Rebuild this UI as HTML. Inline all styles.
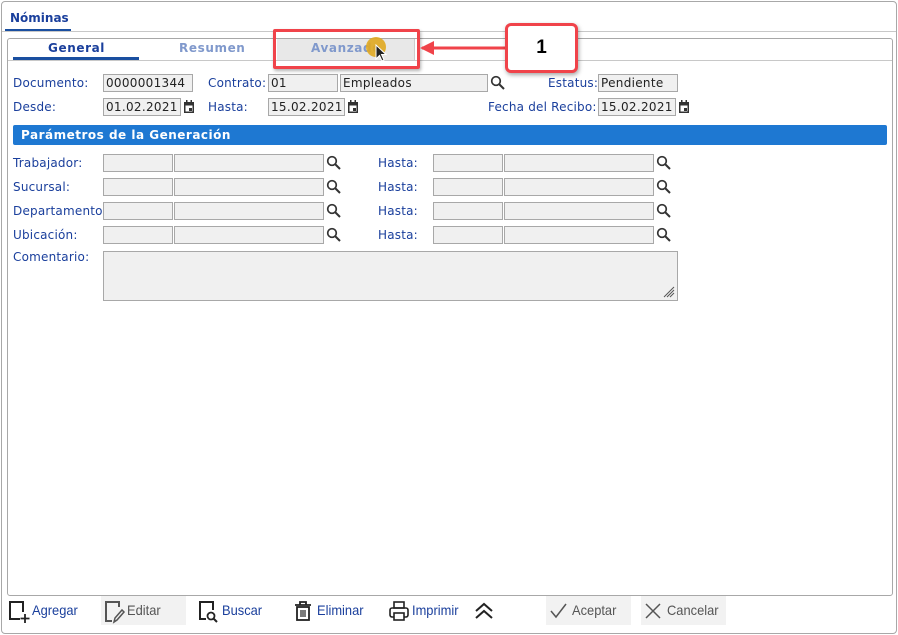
<!DOCTYPE html>
<html><head><meta charset="utf-8"><style>
*{box-sizing:border-box;margin:0;padding:0}
body{width:898px;height:635px;background:#fff;position:relative;overflow:hidden;font-family:"DejaVu Sans","Liberation Sans",sans-serif;}
.a{position:absolute}
.lbl{position:absolute;font-size:12px;color:#1a3f9c;letter-spacing:0.2px}
.inp{position:absolute;height:18px;background:#f0f0f0;border:1px solid #a8a8a8;font-size:12px;color:#222;padding-left:2px;line-height:16px;letter-spacing:0.3px}
.tb{position:absolute;font-family:"Liberation Sans",sans-serif;font-size:14px;color:#1a3f9c;top:602px;transform:scaleX(0.92);transform-origin:left}
.tbg{color:#555}
</style></head><body>
<div class="a" style="left:1px;top:1px;width:896px;height:633px;border:1px solid #a8a8a8;border-radius:4px"></div>
<div class="a" style="left:10px;top:11px;font-size:12px;font-weight:bold;color:#1a3f9c">Nóminas</div>
<div class="a" style="left:5px;top:29px;width:66px;height:3px;background:#1a4fa0"></div>
<div class="a" style="left:2px;top:31px;width:894px;height:1px;background:#c8c8c8"></div>
<div class="a" style="left:7px;top:38px;width:886px;height:558px;border:1px solid #a8a8a8;border-radius:3px"></div>
<div class="a" style="left:277px;top:39px;width:138px;height:21px;background:#e8e8e8;border-right:1px solid #ccc"></div>
<div class="a" style="left:8px;top:60px;width:884px;height:1px;background:#c8c8c8"></div>
<div class="a" style="left:48px;top:41px;font-size:12px;font-weight:bold;color:#1a3f9c;letter-spacing:0.6px">General</div>
<div class="a" style="left:13px;top:57px;width:126px;height:3px;background:#1a4fa0"></div>
<div class="a" style="left:179px;top:41px;font-size:12px;font-weight:bold;color:#8099cc;letter-spacing:0.6px">Resumen</div>
<div class="a" style="left:311px;top:41px;font-size:12px;font-weight:bold;color:#8099cc;letter-spacing:0.6px">Avanzado</div>
<div class="a" style="left:366px;top:37px;width:20px;height:20px;border-radius:50%;background:#e0a820;opacity:0.9"></div>
<svg class="a" style="left:375px;top:44px" width="14" height="20"><path d="M1 1 L1 15 L4.5 11.5 L7 17 L9 16 L6.5 10.5 L11 10.5 Z" fill="#222" stroke="#fff" stroke-width="1"/></svg>
<div class="a" style="left:273px;top:29px;width:147px;height:40px;border:3px solid #f0434a;border-radius:2px;box-shadow:1px 2px 3px rgba(0,0,0,.3)"></div>
<svg class="a" style="left:418px;top:38px" width="90" height="20"><path d="M4 10 L88 10" stroke="#f0434a" stroke-width="3"/><path d="M2 10 L16 3 L16 17 Z" fill="#f0434a"/></svg>
<div class="a" style="left:505px;top:23px;width:73px;height:50px;border:3px solid #f0434a;border-radius:6px;background:#fff;box-shadow:1px 2px 4px rgba(0,0,0,.35);font-family:'Liberation Sans',sans-serif;font-weight:bold;font-size:19px;text-align:center;line-height:44px">1</div>

<div class="lbl" style="left:13px;top:76px">Documento:</div>
<div class="inp" style="left:103px;top:74px;width:90px">0000001344</div>
<div class="lbl" style="left:208px;top:76px">Contrato:</div>
<div class="inp" style="left:268px;top:74px;width:70px">01</div>
<div class="inp" style="left:340px;top:74px;width:148px">Empleados</div>
<div class="lbl" style="left:548px;top:76px">Estatus:</div>
<div class="inp" style="left:598px;top:74px;width:80px">Pendiente</div>
<div class="lbl" style="left:13px;top:100px">Desde:</div>
<div class="inp" style="left:103px;top:98px;width:78px">01.02.2021</div>
<div class="lbl" style="left:208px;top:100px">Hasta:</div>
<div class="inp" style="left:268px;top:98px;width:77px">15.02.2021</div>
<div class="lbl" style="left:488px;top:100px">Fecha del Recibo:</div>
<div class="inp" style="left:598px;top:98px;width:78px">15.02.2021</div>
<svg class="a" style="left:183px;top:100px" width="12" height="14"><rect x="1" y="2" width="10" height="11" fill="#333"/><rect x="2.5" y="5.5" width="7" height="6" fill="#fff"/><rect x="6" y="8" width="3" height="3" fill="#333"/><rect x="3" y="0" width="1.5" height="3" fill="#333"/><rect x="7.5" y="0" width="1.5" height="3" fill="#333"/></svg>
<svg class="a" style="left:347px;top:100px" width="12" height="14"><rect x="1" y="2" width="10" height="11" fill="#333"/><rect x="2.5" y="5.5" width="7" height="6" fill="#fff"/><rect x="6" y="8" width="3" height="3" fill="#333"/><rect x="3" y="0" width="1.5" height="3" fill="#333"/><rect x="7.5" y="0" width="1.5" height="3" fill="#333"/></svg>
<svg class="a" style="left:678px;top:100px" width="12" height="14"><rect x="1" y="2" width="10" height="11" fill="#333"/><rect x="2.5" y="5.5" width="7" height="6" fill="#fff"/><rect x="6" y="8" width="3" height="3" fill="#333"/><rect x="3" y="0" width="1.5" height="3" fill="#333"/><rect x="7.5" y="0" width="1.5" height="3" fill="#333"/></svg>
<svg class="a" style="left:490px;top:75px" width="16" height="16"><circle cx="6" cy="6" r="4.3" fill="none" stroke="#333" stroke-width="1.7"/><path d="M9 9 L14 14" stroke="#333" stroke-width="2"/></svg>

<div class="a" style="left:13px;top:125px;width:874px;height:20px;background:#1e78d2;border-radius:2px;color:#fff;font-weight:bold;font-size:12px;line-height:20px;padding-left:8px;letter-spacing:0.5px">Parámetros de la Generación</div>

<div class="lbl" style="left:13px;top:156px">Trabajador:</div>
<div class="lbl" style="left:13px;top:180px">Sucursal:</div>
<div class="lbl" style="left:13px;top:204px">Departamento:</div>
<div class="lbl" style="left:13px;top:228px">Ubicación:</div>
<div class="lbl" style="left:378px;top:156px">Hasta:</div>
<div class="lbl" style="left:378px;top:180px">Hasta:</div>
<div class="lbl" style="left:378px;top:204px">Hasta:</div>
<div class="lbl" style="left:378px;top:228px">Hasta:</div>
<div class="inp" style="left:103px;top:154px;width:70px"></div><div class="inp" style="left:174px;top:154px;width:150px"></div>
<div class="inp" style="left:103px;top:178px;width:70px"></div><div class="inp" style="left:174px;top:178px;width:150px"></div>
<div class="inp" style="left:103px;top:202px;width:70px"></div><div class="inp" style="left:174px;top:202px;width:150px"></div>
<div class="inp" style="left:103px;top:226px;width:70px"></div><div class="inp" style="left:174px;top:226px;width:150px"></div>
<div class="inp" style="left:433px;top:154px;width:70px"></div><div class="inp" style="left:504px;top:154px;width:150px"></div>
<div class="inp" style="left:433px;top:178px;width:70px"></div><div class="inp" style="left:504px;top:178px;width:150px"></div>
<div class="inp" style="left:433px;top:202px;width:70px"></div><div class="inp" style="left:504px;top:202px;width:150px"></div>
<div class="inp" style="left:433px;top:226px;width:70px"></div><div class="inp" style="left:504px;top:226px;width:150px"></div>
<svg class="a" style="left:326px;top:155px" width="16" height="90"><g fill="none" stroke="#333"><circle cx="6" cy="6" r="4.3" stroke-width="1.7"/><path d="M9 9 L14 14" stroke-width="2"/><circle cx="6" cy="30" r="4.3" stroke-width="1.7"/><path d="M9 33 L14 38" stroke-width="2"/><circle cx="6" cy="54" r="4.3" stroke-width="1.7"/><path d="M9 57 L14 62" stroke-width="2"/><circle cx="6" cy="78" r="4.3" stroke-width="1.7"/><path d="M9 81 L14 86" stroke-width="2"/></g></svg>
<svg class="a" style="left:656px;top:155px" width="16" height="90"><g fill="none" stroke="#333"><circle cx="6" cy="6" r="4.3" stroke-width="1.7"/><path d="M9 9 L14 14" stroke-width="2"/><circle cx="6" cy="30" r="4.3" stroke-width="1.7"/><path d="M9 33 L14 38" stroke-width="2"/><circle cx="6" cy="54" r="4.3" stroke-width="1.7"/><path d="M9 57 L14 62" stroke-width="2"/><circle cx="6" cy="78" r="4.3" stroke-width="1.7"/><path d="M9 81 L14 86" stroke-width="2"/></g></svg>
<div class="lbl" style="left:13px;top:250px">Comentario:</div>
<div class="inp" style="left:103px;top:251px;width:575px;height:50px"></div>
<svg class="a" style="left:663px;top:286px" width="12" height="12"><path d="M11 1 L1 11 M11 4 L4 11 M11 7 L7 11" stroke="#555" stroke-width="1"/></svg>

<div class="a" style="left:101px;top:596px;width:85px;height:29px;background:#f2f2f2"></div>
<div class="a" style="left:546px;top:596px;width:85px;height:29px;background:#f2f2f2"></div>
<div class="a" style="left:641px;top:596px;width:85px;height:29px;background:#f2f2f2"></div>
<svg class="a" style="left:8px;top:600px" width="22" height="24"><path d="M12 19 H2 V2 H15 V12" fill="none" stroke="#222" stroke-width="2"/><path d="M17 14 V23 M12.5 18.5 H21.5" stroke="#222" stroke-width="1.8"/></svg>
<div class="tb" style="left:32px">Agregar</div>
<svg class="a" style="left:104px;top:600px" width="22" height="24"><path d="M8 21 H2 V2 H15 V7" fill="none" stroke="#555" stroke-width="2"/><path d="M10 22 L11 18 L18 10 L20 12 L13 20 Z" fill="none" stroke="#555" stroke-width="1.5"/></svg>
<div class="tb tbg" style="left:127px">Editar</div>
<svg class="a" style="left:198px;top:600px" width="22" height="24"><path d="M8 19 H2 V2 H15 V10" fill="none" stroke="#222" stroke-width="2"/><circle cx="13" cy="16" r="3.5" fill="none" stroke="#222" stroke-width="1.8"/><path d="M15.5 18.5 L19 22" stroke="#222" stroke-width="2"/></svg>
<div class="tb" style="left:222px">Buscar</div>
<svg class="a" style="left:293px;top:600px" width="20" height="22"><path d="M2 5 H18 M7 5 V2 H13 V5" fill="none" stroke="#222" stroke-width="1.8"/><rect x="4" y="7" width="12" height="13" fill="none" stroke="#222" stroke-width="1.8"/><path d="M8 10 V17 M10 10 V17 M12 10 V17" stroke="#222" stroke-width="1.2"/></svg>
<div class="tb" style="left:317px">Eliminar</div>
<svg class="a" style="left:388px;top:600px" width="22" height="22"><rect x="6" y="2" width="10" height="6" fill="none" stroke="#222" stroke-width="1.6"/><rect x="2" y="8" width="18" height="9" rx="2" fill="none" stroke="#222" stroke-width="1.6"/><rect x="6" y="13" width="10" height="7" fill="#fff" stroke="#222" stroke-width="1.6"/></svg>
<div class="tb" style="left:412px">Imprimir</div>
<svg class="a" style="left:474px;top:602px" width="20" height="18"><path d="M2 9 L10 2 L18 9 M2 16 L10 9 L18 16" fill="none" stroke="#222" stroke-width="2"/></svg>
<svg class="a" style="left:549px;top:602px" width="20" height="18"><path d="M2 9 L7 15 L17 2" fill="none" stroke="#555" stroke-width="1.5"/></svg>
<div class="tb tbg" style="left:572px">Aceptar</div>
<svg class="a" style="left:644px;top:602px" width="18" height="18"><path d="M2 2 L16 16 M16 2 L2 16" stroke="#555" stroke-width="1.5"/></svg>
<div class="tb tbg" style="left:667px">Cancelar</div>
</body></html>
